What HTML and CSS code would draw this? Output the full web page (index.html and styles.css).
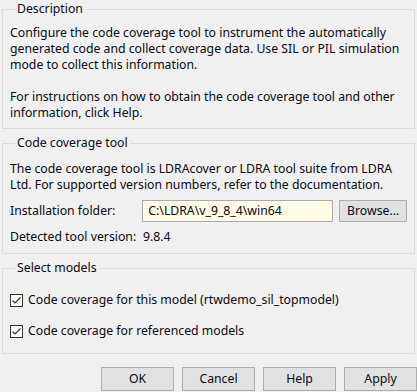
FILE: index.html
```html
<!DOCTYPE html>
<html>
<head>
<meta charset="utf-8">
<link rel="stylesheet" href="styles.css">
</head>
<body>
<div class="dialog">
  <fieldset class="group g-desc">
    <legend>Description</legend>
    <p class="text">Configure the code coverage tool to instrument the automatically<br>generated code and collect coverage data. Use SIL or PIL simulation<br>mode to collect this information.</p>
    <p class="text gap">For instructions on how to obtain the code coverage tool and other<br>information, click Help.</p>
  </fieldset>
  <fieldset class="group g-tool">
    <legend>Code coverage tool</legend>
    <p class="text">The code coverage tool is LDRAcover or LDRA tool suite from LDRA<br>Ltd. For supported version numbers, refer to the documentation.</p>
    <div class="row install">
      <span class="lbl">Installation folder:</span>
      <span class="field">C:\LDRA\v_9_8_4\win64</span>
      <span class="btn browse">Browse...</span>
    </div>
    <div class="row detected">
      <span class="lbl">Detected tool version:</span>
      <span class="val">9.8.4</span>
    </div>
  </fieldset>
  <fieldset class="group g-models">
    <legend>Select models</legend>
    <label class="check c1"><span class="box"><svg width="11" height="11" viewBox="0 0 11 11"><path d="M1.5 5.5 L4 8 L9.5 2.5" fill="none" stroke="#333" stroke-width="1.2"/></svg></span>Code coverage for this model (rtwdemo_sil_topmodel)</label>
    <label class="check c2"><span class="box"><svg width="11" height="11" viewBox="0 0 11 11"><path d="M1.5 5.5 L4 8 L9.5 2.5" fill="none" stroke="#333" stroke-width="1.2"/></svg></span>Code coverage for referenced models</label>
  </fieldset>
  <div class="buttons">
    <span class="btn">OK</span>
    <span class="btn">Cancel</span>
    <span class="btn">Help</span>
    <span class="btn">Apply</span>
  </div>
</div>
</body>
</html>
```
FILE: styles.css
```css
html, body {
  margin: 0;
  padding: 0;
  background: #f0f0f0;
}
body {
  width: 417px;
  height: 392px;
  overflow: hidden;
  font-family: "Noto Sans", "DejaVu Sans", sans-serif;
  font-size: 12.25px;
  line-height: 16px;
  color: #0a0a14;
}
.dialog {
  padding: 1px 2px 0 2px;
}
.group {
  margin: 0;
  border: 1px solid #dcdcdc;
  padding: 0 7px 7px 7px;
  min-width: 0;
}
.group legend {
  margin-left: 5px;
  padding: 0 2px;
  line-height: 16px;
  height: 16px;
}
.g-desc {
  padding-top: 8px;
  padding-bottom: 7px;
}
.g-tool {
  margin-top: 6px;
  padding-top: 10px;
  padding-bottom: 8px;
}
.g-models {
  margin-top: 6px;
  padding-top: 16px;
  padding-bottom: 14px;
}
.text {
  margin: 0;
  white-space: nowrap;
}
.text.gap {
  margin-top: 16px;
}
.row {
  display: flex;
  align-items: center;
}
.install {
  margin-top: 7px;
  height: 22px;
}
.lbl {
  width: 133px;
}
.field {
  box-sizing: border-box;
  width: 192px;
  height: 22px;
  border: 1px solid #aaa;
  background: #fffbe7;
  padding: 0 5px;
  line-height: 20px;
}
.btn {
  box-sizing: border-box;
  display: inline-flex;
  align-items: center;
  justify-content: center;
  background: #e1e1e1;
  border: 1px solid #adadad;
  height: 24px;
}
.browse {
  margin-left: 6px;
  width: 68px;
  height: 22px;
}
.detected {
  margin-top: 7px;
  height: 16px;
}
.check {
  display: flex;
  align-items: center;
  height: 16px;
}
.c2 {
  margin-top: 15px;
}
.box {
  box-sizing: border-box;
  width: 13px;
  height: 13px;
  border: 1px solid #333;
  background: #fff;
  margin-right: 5px;
  display: inline-flex;
  align-items: center;
  justify-content: center;
}
.box svg {
  display: block;
}
.buttons {
  display: flex;
  justify-content: flex-end;
  gap: 8px;
  margin-top: 13px;
  margin-right: -2px;
}
.buttons .btn {
  width: 73px;
}
```
